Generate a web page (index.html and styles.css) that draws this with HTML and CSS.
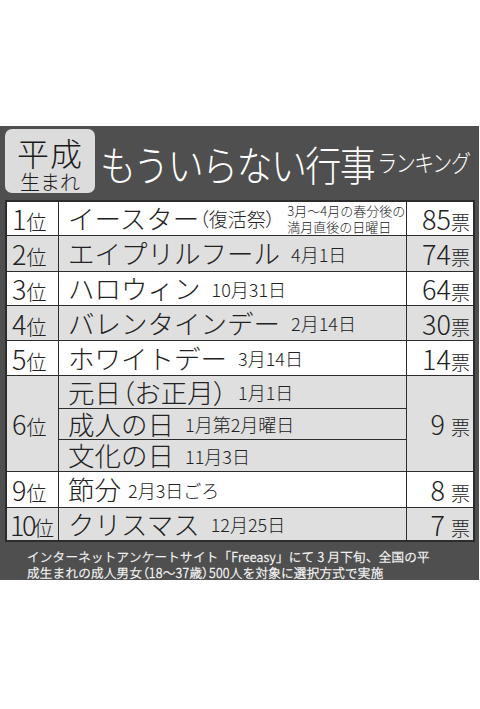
FILE: index.html
```html
<!DOCTYPE html>
<html lang="ja">
<head>
<meta charset="utf-8">
<title>平成生まれ もういらない行事ランキング</title>
<link rel="stylesheet" href="styles.css">
</head>
<body>
<div class="panel">
  <div class="head">
    <div class="badge"><span class="b1">平成</span><span class="b2">生まれ</span></div>
    <h1 class="title"><span class="t-main">もういらない行事</span><span class="t-sub">ランキング</span></h1>
  </div>
  <div class="table">
    <div class="rank"><span>1<small>位</small></span></div>
    <div class="name"><span>イースター</span><span class="sub"><span class="p">（</span>復活祭<span class="p">）</span></span><span class="memo">3月～4月の春分後の<br>満月直後の日曜日</span></div>
    <div class="votes"><span>85<small>票</small></span></div>

    <div class="rank alt"><span>2<small>位</small></span></div>
    <div class="name alt"><span>エイプリルフール</span><span class="date">4月1日</span></div>
    <div class="votes alt"><span>74<small>票</small></span></div>

    <div class="rank"><span>3<small>位</small></span></div>
    <div class="name"><span>ハロウィン</span><span class="date">10月31日</span></div>
    <div class="votes"><span>64<small>票</small></span></div>

    <div class="rank alt"><span>4<small>位</small></span></div>
    <div class="name alt"><span>バレンタインデー</span><span class="date">2月14日</span></div>
    <div class="votes alt"><span>30<small>票</small></span></div>

    <div class="rank"><span>5<small>位</small></span></div>
    <div class="name"><span>ホワイトデー</span><span class="date">3月14日</span></div>
    <div class="votes"><span>14<small>票</small></span></div>

    <div class="rank alt span3"><span>6<small>位</small></span></div>
    <div class="name alt"><span>元日<span class="p">（</span>お正月<span class="p">）</span></span><span class="date">1月1日</span></div>
    <div class="votes alt span3"><span>9 <small>票</small></span></div>
    <div class="name alt"><span>成人の日</span><span class="date">1月第2月曜日</span></div>
    <div class="name alt"><span>文化の日</span><span class="date">11月3日</span></div>

    <div class="rank"><span>9<small>位</small></span></div>
    <div class="name"><span>節分</span><span class="date near">2月3日ごろ</span></div>
    <div class="votes"><span>8 <small>票</small></span></div>

    <div class="rank alt"><span class="ten">10</span><span><small>位</small></span></div>
    <div class="name alt"><span>クリスマス</span><span class="date">12月25日</span></div>
    <div class="votes alt"><span>7 <small>票</small></span></div>
  </div>
  <p class="source">インターネットアンケートサイト「Freeasy」にて 3 月下旬、全国の平<br>成生まれの成人男女<span class="p">（</span>18～37歳<span class="p">）</span>500人を対象に選択方式で実施</p>
</div>
</body>
</html>
```
FILE: styles.css
```css
body {
  margin: 0;
  background: #ffffff;
  font-family: "Noto Sans CJK JP Light", "Noto Sans CJK JP DemiLight", "Noto Sans CJK JP", "Noto Sans", sans-serif;
  color: #222222;
}

.panel {
  margin-top: 126px;
  width: 479px;
  height: 454px;
  box-sizing: border-box;
  padding: 0 4px 0 5px;
  background: #4f4f4f;
}

.head {
  height: 74px;
  display: flex;
  align-items: flex-start;
  gap: 5px;
}

.badge {
  margin-top: 3px;
  width: 90px;
  height: 64px;
  background: #dcdcdc;
  border-radius: 7px;
  display: flex;
  flex-direction: column;
  align-items: center;
  color: #1a1a1a;
  line-height: 1;
}

.b1 {
  margin-top: 7px;
  font-size: 32px;
  letter-spacing: 1px;
}

.b2 {
  margin-top: 4px;
  font-size: 20px;
}

.title {
  margin: 0;
  align-self: center;
  display: flex;
  align-items: center;
  color: #ffffff;
  font-weight: 300;
  white-space: nowrap;
  line-height: 1;
}

.t-main {
  display: inline-block;
  font-size: 36px;
  letter-spacing: -1.6px;
  transform: scaleY(1.14);
}

.t-sub {
  display: inline-block;
  margin-left: 3px;
  font-size: 20px;
  letter-spacing: -1.4px;
  transform: scaleY(1.18);
}

.table {
  width: 470px;
  box-sizing: border-box;
  display: grid;
  grid-template-columns: 51px 347px 66px;
  grid-template-rows: 33px 35px 33px 34px 34px 32px 30px 31px 35px 32px;
  gap: 1px;
  background: #2c2c2c;
  border: 2px solid #2c2c2c;
}

.rank,
.name,
.votes {
  background: #ffffff;
  display: flex;
  align-items: center;
  white-space: nowrap;
  line-height: 1;
}

.alt {
  background: #dfdfdf;
}

.span3 {
  grid-row: span 3;
}

.rank {
  grid-column: 1;
  padding-left: 5px;
  font-size: 27px;
}

.rank small {
  font-size: 20px;
}

.rank .ten {
  letter-spacing: -2.5px;
  margin-left: -2px;
}

.name {
  grid-column: 2;
  padding-left: 9px;
  font-size: 26.5px;
}

.p {
  font-feature-settings: "palt";
}

.sub {
  font-size: 19px;
}

.memo {
  margin-left: 12px;
  font-size: 13px;
  line-height: 16px;
}

.date {
  margin-left: 11px;
  font-size: 18px;
}

.date.near {
  margin-left: 7px;
}

.votes {
  grid-column: 3;
  justify-content: flex-end;
  padding-right: 3px;
  font-size: 27px;
}

.votes small {
  font-size: 19px;
}

.source {
  margin: 0;
  padding: 7px 0 0 22px;
  font-size: 12.5px;
  line-height: 16px;
  font-weight: 700;
  letter-spacing: 0.3px;
  color: #f0f0f0;
  white-space: nowrap;
}
```
